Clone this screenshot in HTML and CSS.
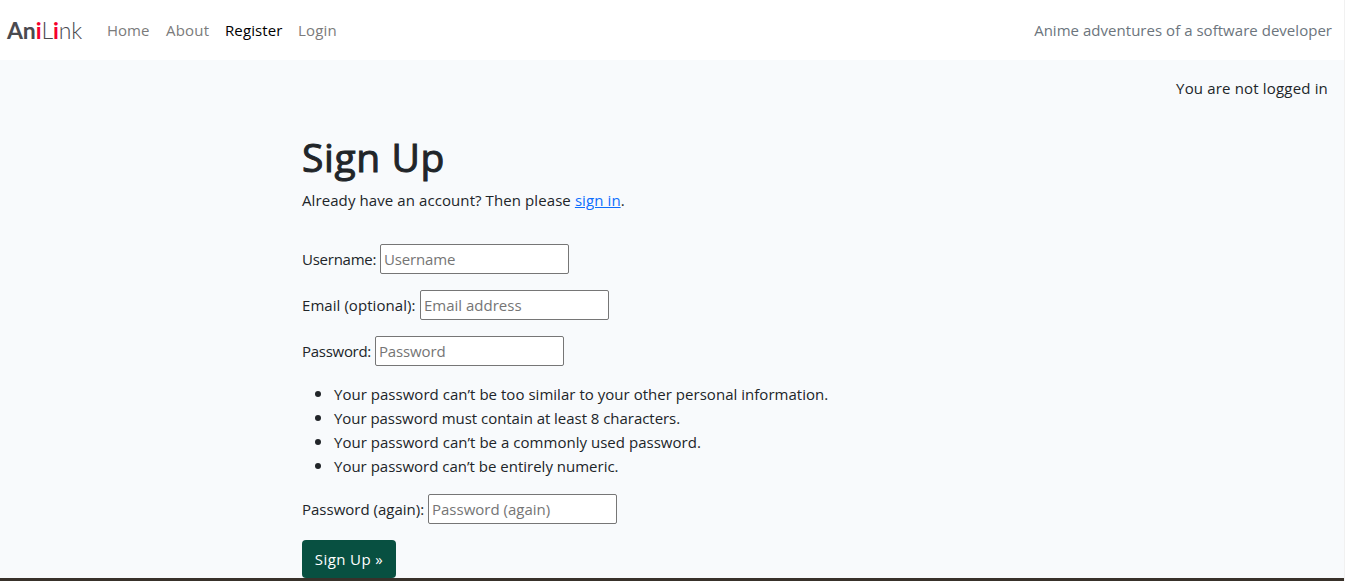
FILE: index.html
```html
<!DOCTYPE html>
<html lang="en">
<head>
<meta charset="utf-8">
<title>AniLink - Sign Up</title>
<link rel="stylesheet" href="styles.css">
</head>
<body>
<div class="page">
  <header class="navbar">
    <a class="brand"><b>An<span class="red">i</span></b>L<b class="red">i</b>nk</a>
    <nav class="nav">
      <a class="home">Home</a>
      <a class="about">About</a>
      <a class="active">Register</a>
      <a class="login">Login</a>
    </nav>
    <span class="tagline">Anime adventures of a software developer</span>
  </header>
  <p class="status"><span>You are not logged in</span></p>
  <main class="content">
    <h1>Sign Up</h1>
    <p class="intro"><span>Already have an account? Then please <a class="link">sign in</a>.</span></p>
    <form>
      <div class="field"><label class="l-user" for="u">Username:</label><input id="u" type="text" placeholder="Username"></div>
      <div class="field"><label class="l-email" for="e">Email (optional):</label><input id="e" type="email" placeholder="Email address"></div>
      <div class="field"><label class="l-pass" for="p">Password:</label><input id="p" type="password" placeholder="Password"></div>
      <ul class="rules">
        <li><span class="r1">Your password can’t be too similar to your other personal information.</span></li>
        <li><span class="r2">Your password must contain at least 8 characters.</span></li>
        <li><span class="r3">Your password can’t be a commonly used password.</span></li>
        <li><span class="r4">Your password can’t be entirely numeric.</span></li>
      </ul>
      <div class="field"><label class="l-again" for="q">Password (again):</label><input id="q" type="password" placeholder="Password (again)"></div>
      <button class="submit" type="button">Sign Up »</button>
    </form>
  </main>
  <footer class="footer"></footer>
</div>
</body>
</html>
```
FILE: styles.css
```css
* { box-sizing: border-box; }
body {
  margin: 0;
  overflow: hidden;
  font: 15px/24px "Segoe UI", "Open Sans", "Noto Sans", sans-serif;
  color: #212529;
  background: #f1f1f1;
}
h1, p, ul { margin: 0; }
.page {
  width: 1344px;
  height: 581px;
  display: flex;
  flex-direction: column;
  background: #f8fafc;
}
.navbar {
  height: 60px;
  display: flex;
  align-items: center;
  padding: 0 12px 1px 7px;
  background: #fff;
  white-space: nowrap;
}
.brand {
  width: 76px;
  font-family: Lato, sans-serif;
  font-size: 23px;
  font-weight: 300;
  letter-spacing: -0.1px;
  color: #4a4a4f;
}
.brand b { font-weight: 700; }
.brand .red { color: #f5002d; }
.nav { display: flex; gap: 16px; margin-left: 24px; color: #7b7b7b; }
.nav .home { width: 43px; }
.nav .about { width: 43px; letter-spacing: 0.2px; }
.nav .active { width: 57px; color: #000; letter-spacing: 0.1px; }
.nav .login { letter-spacing: 0.2px; }
.tagline { margin-left: auto; color: #6c757d; letter-spacing: 0.03px; }
.status { display: flex; justify-content: flex-end; padding: 16px 16px 0 0; letter-spacing: 0.17px; }
.content { padding: 33px 0 0 302px; }
h1 {
  font-size: 39px;
  line-height: 48px;
  font-weight: 500;
  letter-spacing: 0.6px;
  -webkit-text-stroke: 1px #212529;
}
.intro { margin-top: 7px; margin-bottom: 32px; letter-spacing: 0.09px; }
.link { color: #0d6efd; text-decoration: underline; }
.field { display: flex; align-items: center; gap: 4px; height: 30px; margin-bottom: 16px; }
.l-user { width: 74px; letter-spacing: -0.25px; }
.l-email { width: 114px; letter-spacing: 0.06px; }
.l-pass { width: 69px; letter-spacing: -0.28px; }
.l-again { width: 122px; }
label { white-space: nowrap; }
input {
  width: 189px;
  height: 30px;
  padding: 1px 3px;
  border: 1px solid #767676;
  border-radius: 2px;
  background: #fff;
  font: inherit;
}
input::placeholder { color: #757575; }
#u, #p { letter-spacing: -0.15px; }
.rules { padding-left: 32px; margin-top: -1px; margin-bottom: 17px; }
.rules li { height: 24px; }
.rules li::marker { font-size: 18px; }
.r1 { letter-spacing: 0.03px; }
.r2 { letter-spacing: -0.04px; }
.r3 { letter-spacing: 0.03px; }
.submit {
  display: block;
  width: 94px;
  height: 38px;
  padding: 0;
  border: 0;
  border-radius: 4px;
  background: #085041;
  color: #fff;
  font: inherit;
  letter-spacing: 0.4px;
}
.footer { flex: 1; background: #38312a; }
```
